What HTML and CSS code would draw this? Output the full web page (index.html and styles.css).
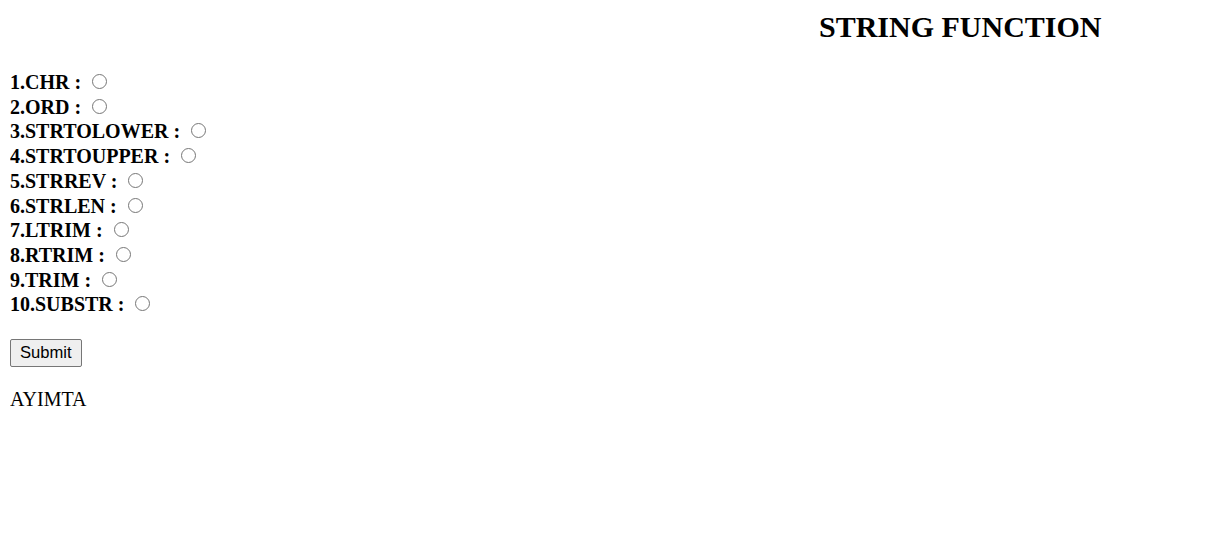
FILE: index.html
```html
<!DOCTYPE html>
<html>
<head>
<meta charset="utf-8">
<title>String Function</title>
<link rel="stylesheet" href="styles.css">
</head>
<body>
<form class="form">
  <h2 class="title">STRING FUNCTION</h2>
  <div class="options">
    <label class="opt">1.CHR : <input type="radio" name="fn" class="radio"></label><br>
    <label class="opt">2.ORD : <input type="radio" name="fn" class="radio"></label><br>
    <label class="opt">3.STRTOLOWER : <input type="radio" name="fn" class="radio"></label><br>
    <label class="opt">4.STRTOUPPER : <input type="radio" name="fn" class="radio"></label><br>
    <label class="opt">5.STRREV : <input type="radio" name="fn" class="radio"></label><br>
    <label class="opt">6.STRLEN : <input type="radio" name="fn" class="radio"></label><br>
    <label class="opt">7.LTRIM : <input type="radio" name="fn" class="radio"></label><br>
    <label class="opt">8.RTRIM : <input type="radio" name="fn" class="radio"></label><br>
    <label class="opt">9.TRIM : <input type="radio" name="fn" class="radio"></label><br>
    <label class="opt">10.SUBSTR : <input type="radio" name="fn" class="radio"></label>
  </div>
  <p class="actions"><button type="button" class="submit">Submit</button></p>
  <p class="result">AYIMTA</p>
</form>
</body>
</html>
```

FILE: styles.css
```css
body {
  margin: 10px;
  font-family: "Liberation Serif", "Times New Roman", serif;
  color: #000;
  background: #fff;
}
.form {
  margin: 0;
}
.title {
  font-size: 30px;
  font-weight: bold;
  margin: 0 0 26px 0;
  padding-left: 809px;
}
.options {
  font-size: 20px;
  font-weight: bold;
  line-height: 24.7px;
}
.opt {
  white-space: nowrap;
}
.radio {
  margin: 4px 4px 0 6px;
  width: 15px;
  height: 15px;
}
.actions {
  margin: 22px 0 0 0;
}
.submit {
  font-family: "Liberation Sans", Arial, sans-serif;
  font-size: 16.6px;
  height: 28px;
  padding: 1px 9px;
  border: 1px solid #767676;
  border-radius: 2px;
  background: #efefef;
  color: #000;
}
.result {
  font-size: 20px;
  margin: 21px 0;
}
```
